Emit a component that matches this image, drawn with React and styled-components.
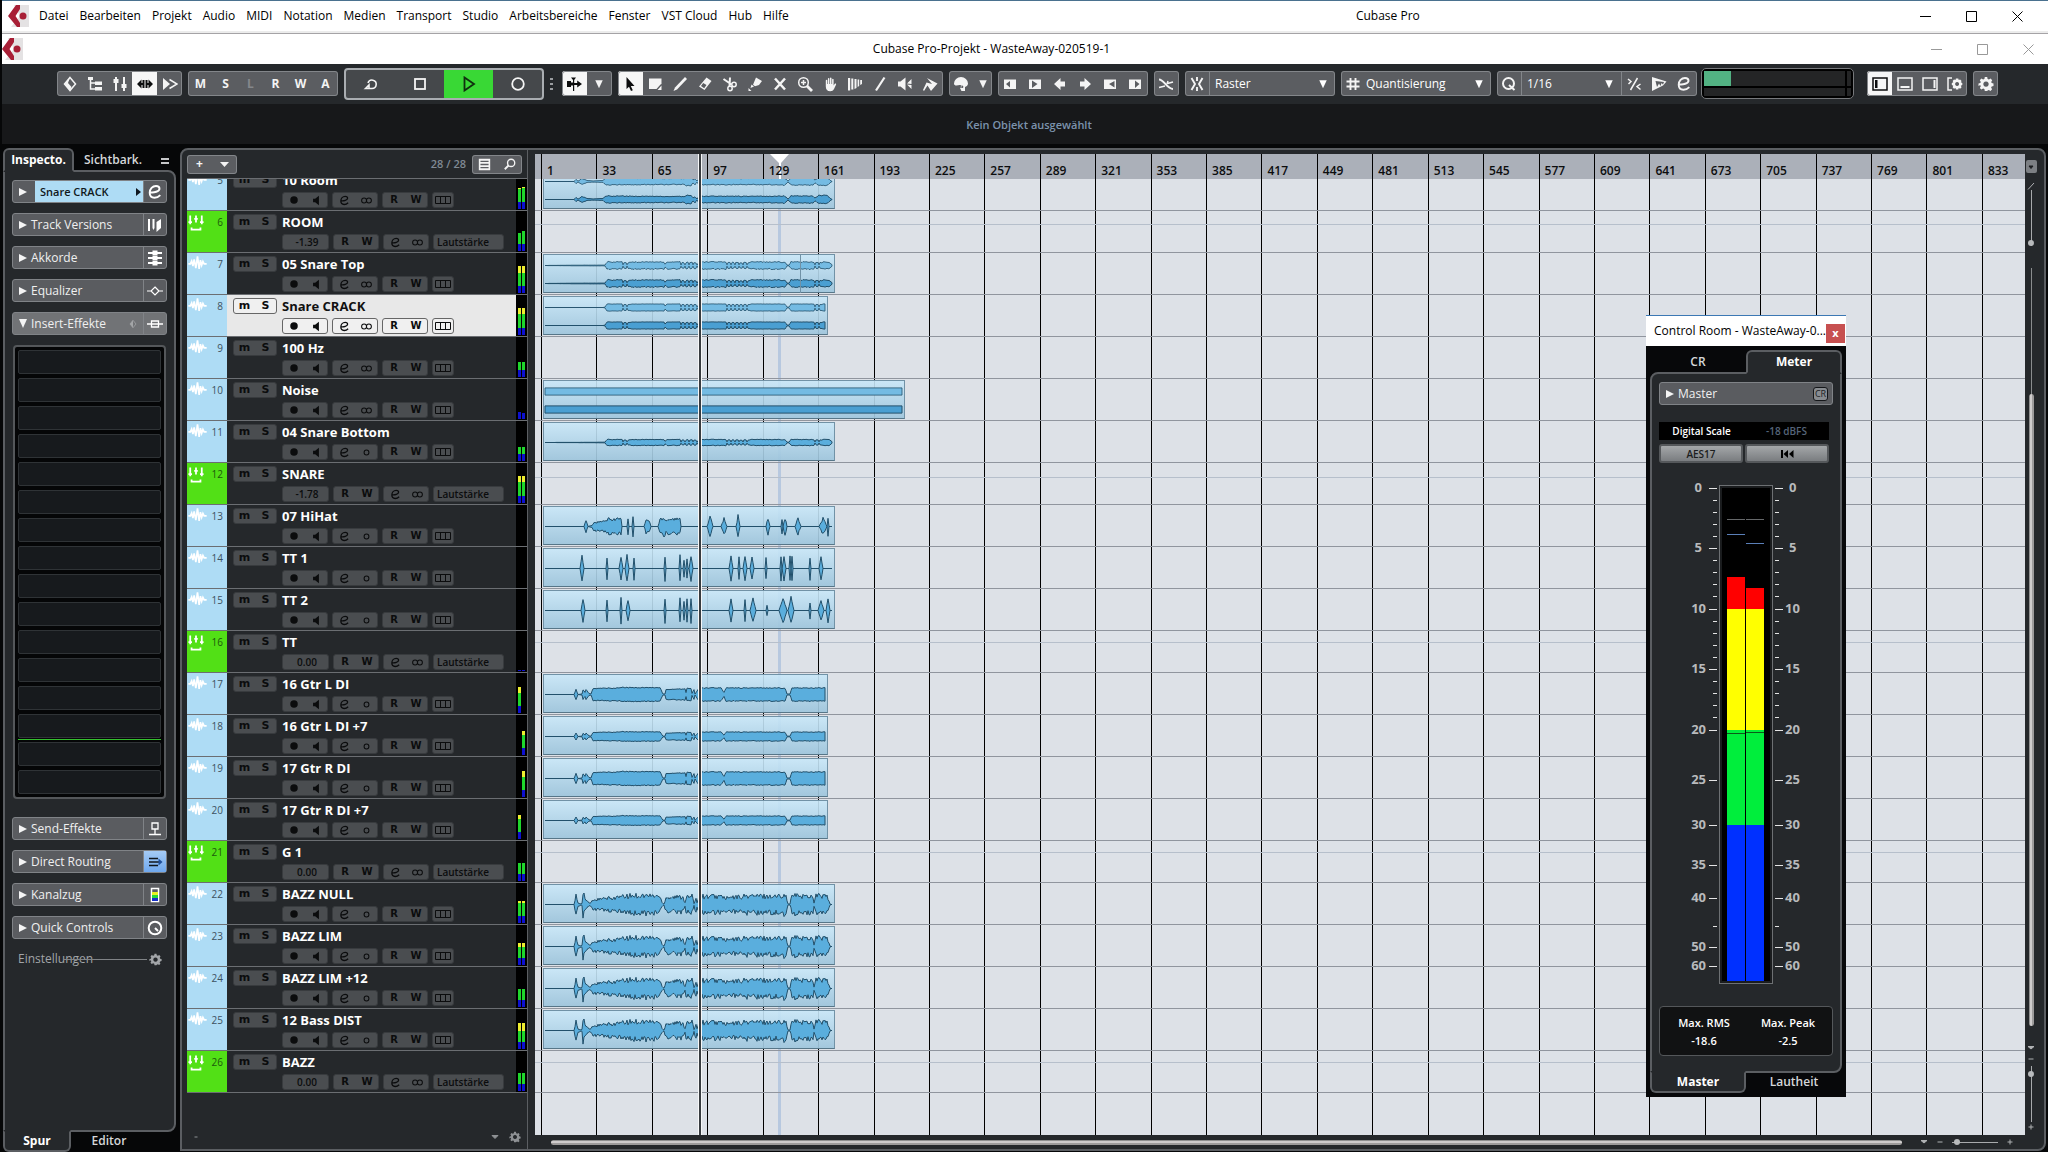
import React from "react";
import styled, {createGlobalStyle, css} from "styled-components";

const GlobalStyle = createGlobalStyle`
    * {
        box-sizing: border-box;
    }

    body {
        margin: 0;
        background: #060708;
        font-family: "Open Sans", "Noto Sans", sans-serif;
        font-size: 12px;
        line-height: 16px;
        color: #fff;
        overflow: hidden;
    }

    button,
    select {
        font: inherit;
        color: inherit;
        background: none;
        border: none;
        border-radius: 0;
        padding: 0;
        margin: 0;
        appearance: none;
    }
`;

const edge = "#5b5e62";
const panel = "#25282b";

/* ---------- icons ---------- */

const line = {fill: "none", stroke: "currentColor", strokeWidth: 1.5};

const icons = {
    diamond: <><path d="M8 1.500L13.500 8 8 14.500 2.500 8z" {...line}/><path d="M8 1.500L2.500 8 8 14.500 9.500 11 6 7z"/></>,
    tree: <><path d="M1 1h5v3H1zM8 5.500h7v3.500H8zM8 11h7v3.500H8z"/><path d="M3.500 3v10H8M3.500 7H8" {...line}/></>,
    faders: <path d="M3 1h2v2h1.500v4H5v8H3V7H1.500V3H3zM11 1h2v7h1.500v4H13v3h-2v-3H9.500V8H11z"/>,
    spread: <path d="M0 8l4.500-4.500V7h1V4h2v8h-2V9h-1v3.500zM16 8l-4.500-4.500V7h-1V4h-2v8h2V9h1v3.500z"/>,
    skip: <><path d="M1 2v12L8 8z"/><path d="M7.500 3.500L15 8l-7.500 4.500" {...line}/></>,
    cycle: <path d="M3 12.500h6a4.200 4.200 0 1 0-4-5.500M2.500 12.500L6 9v3.500z" {...line} strokeWidth="1.600"/>,
    stop: <rect x="3" y="3" width="10" height="10" {...line} strokeWidth="1.800"/>,
    play: <path d="M3.500 1.500L13 8l-9.500 6.500z" {...line} strokeWidth="1.800"/>,
    record: <circle cx="8" cy="8" r="5.800" {...line} strokeWidth="1.800"/>,
    autoscroll: <path d="M5 1.500h5L8.200 4v3h3V4.500L16 8l-4.800 3.500V9h-3v6H7V9.500H5V11H1V5h4v1.500h2V4z"/>,
    down: <path d="M3 3h10L8 13.500z"/>,
    arrow: <path d="M4.500 1l8 9H8.800l2 4.300-1.800.8-2-4.300L4.500 13z"/>,
    range: <path d="M2 2.500h12.500V8l-1 .5L9.500 13H2zM10.500 14l4-4.500V14z"/>,
    pencil: <path d="M13 1l2 2L5 13.500 1.500 15 3 11.500z"/>,
    eraser: <path d="M9.500 1.500L14.500 5 7.500 14 2 10.500zM4 10l3.200 2.200L9.500 9 6.200 7z" fillRule="evenodd"/>,
    scissors: <><path d="M1.500 3l8 5.500M8 1.500L7.500 10" {...line} strokeWidth="2"/><circle cx="12" cy="8.500" r="2.200" {...line}/><circle cx="8" cy="12.500" r="2.200" {...line}/></>,
    glue: <path d="M9 1.500l6 3.500-3 4-4 1.200-2-1.500zM4.500 8.500L7 10.500 3.500 12zM1.500 12l3 3h-3z"/>,
    cross: <path d="M3 2.500l10 11M13 2.500l-10 11" {...line} strokeWidth="2.500"/>,
    zoom: <><circle cx="6.500" cy="6.500" r="4.800" {...line}/><path d="M10 10l5 5" {...line} strokeWidth="2.800"/><path d="M4 6.500h5M6.500 4v5" {...line}/></>,
    hand: <path d="M3.800 4.500c0-1 1.500-1 1.500 0V8h.6V2.800c0-1 1.500-1 1.500 0V8H8V2.300c0-1 1.500-1 1.500 0V8h.6V3.500c0-1 1.500-1 1.500 0v6l1-1.500c.8-1 1.900-.3 1.400.8L12 13c-.8 1.600-2 2.200-3.700 2.200-3 0-4.500-1.500-4.500-4.700z"/>,
    comp: <path d="M1 2h2.200v12.500H1zM4.300 2.500h2v11h-2zM7.500 3h2v9l-2 1zM10.600 3.500h1.600v6.500l-1.600 1zM13.200 4H15v4l-1.800 1z"/>,
    slash: <path d="M12.500 1.500L4 14.500" {...line} strokeWidth="2.200"/>,
    speaker: <path d="M1 5.500h2.500L8.500 1.500v13l-5-4H1zM10 7.500L14.500 3v5zM10 8.500l4.500 4.500V9z"/>,
    warp: <path d="M5 2l8.500 4.500 2 1-6.500 7.500L5.500 9.500 2 15 1 14l3.500-7.500L10 8z"/>,
    palette: <path d="M8 1a7 6.500 0 0 1 7 6.500c0 2-1.500 3-3 3.500v4H8.500L7 12c1.500 0 2-1.500 1-2.500S5 9.500 3.500 9.500 1 9 1 7.500A7 6.500 0 0 1 8 1zM9 9.500a1.300 1.300 0 1 0 .1 0z" fillRule="evenodd"/>,
    boxLeft: <path d="M2 3.500h12v9.500H2zM8 5v6.500L4 8z" fillRule="evenodd"/>,
    boxRight: <path d="M2 3.500h12v9.500H2zM5 4.500v7.500L10.500 8z" fillRule="evenodd"/>,
    left: <path d="M2 8l6.500-6v3.500H13v5H8.500V14z"/>,
    right: <path d="M14 8L7.500 2v3.500H3v5h4.500V14z"/>,
    trimLeft: <path d="M2 3.500h12v9.500H2zM12.500 5v6.500L7 8z" fillRule="evenodd"/>,
    trimRight: <path d="M2 3.500h12v9.500H2zM8 4.500v7.500L12.500 8z" fillRule="evenodd"/>,
    crossfade: <><path d="M1 3.500c5 0 8 9.500 14 9.500" {...line} strokeWidth="2"/><path d="M9.500 7.500L15 6M10 5l-1 3M1 11.500l6-1.500" {...line}/></>,
    snap: <path d="M8 1v4M8 11v4M2.500 2L6 8l-3.500 6M13.500 2L10 8l3.500 6" {...line} strokeWidth="1.900"/>,
    hash: <path d="M5.500 2v12M10.500 2v12M1.500 5.500h13M1.500 10.500h13" {...line} strokeWidth="1.900"/>,
    loupe: <><circle cx="7.500" cy="7.500" r="5.500" {...line} strokeWidth="2"/><path d="M8 9l5.500 5" {...line} strokeWidth="2"/></>,
    soft: <path d="M11.500 2l-7 12M2 3l3 2.500L2.500 8M14.500 8L11 10.500l3.500 3" {...line}/>,
    flag: <path fillRule="evenodd" d="M1 1l14.500 4.500L12 9.500 1 15zM4.500 5l1.500 6L8 7.500l1.500 2.500 1-3 1.500 1.500 1-2.500z"/>,
    edit: <path d="M3 8.300c4 .6 9.500-.8 9.500-3.600C12.500 2.800 10.800 2 9 2 5.500 2 2.700 5 2.700 8.800c0 3.200 2 5 4.800 5 2.200 0 4.200-.9 5.800-2.600" {...line} strokeWidth="1.900"/>,
    zoneLeft: <><rect x="1" y="2" width="14" height="12" {...line}/><rect x="3" y="4" width="2.500" height="8"/></>,
    zoneBottom: <><rect x="1" y="2" width="14" height="12" {...line}/><rect x="3.500" y="10" width="9" height="2"/></>,
    zoneRight: <><rect x="1" y="2" width="14" height="12" {...line}/><rect x="11.500" y="4" width="2" height="8"/></>,
    gear: <path fillRule="evenodd" d="M6.800 1h2.400l.4 1.900 1.300.6 1.700-1 1.600 1.700-1 1.700.5 1.200 1.800.4v2.400l-1.800.5-.6 1.200 1 1.700-1.600 1.600-1.700-1-1.200.6L9.200 15H6.800l-.4-1.900-1.300-.5-1.700 1-1.600-1.600 1-1.700-.6-1.300L.500 9.900V7.500l1.800-.4.5-1.200-1-1.700 1.600-1.700 1.700 1 1.300-.6zM8 5.400a2.700 2.700 0 1 0 .01 0z"/>,
    zoneGear: <><path d="M5 2H1v12h4" {...line}/><path fillRule="evenodd" d="M8.900 2.500h2.400l.4 1.400 1.400-.5 1.500 1.600-.8 1.300 1.500.8v2l-1.500.7.8 1.400-1.500 1.500-1.400-.6-.4 1.500H8.900l-.4-1.500-1.500.6-1.400-1.500.7-1.400L4.800 9V7.100l1.500-.8L5.600 5 7 3.400l1.500.5zM10.100 6a2 2 0 1 0 .01 0z"/></>,
    versions: <path d="M1 2h2v12H1zM5.500 2h2v9l-1 2-1-2zM9.500 5L14 2v9l-4.500 4z"/>,
    chords: <path d="M1 2h4.500V.5h5V2H15v2h-4.500v1.500h-5V4H1zM1 7h4.500V6h5v1H15v2h-4.500v1h-5V9H1zM1 12h4.500v-1.500h5V12H15v2h-4.500v1.500h-5V14H1z"/>,
    eq: <path d="M0 8h4M12 8h4M8 4l4 4-4 4-4-4z" {...line} strokeWidth="1.200"/>,
    insert: <path d="M0 8h16M4.500 5h7v6h-7z" {...line} strokeWidth="1.300"/>,
    send: <path d="M5 2h6v6H5zM8 8v5M2 13.500h12" {...line} strokeWidth="1.300"/>,
    routing: <><path d="M2 4.500h9M2 8h10M2 11.500h9" stroke="#10161c" strokeWidth="1.500"/><path d="M11.500 4.500L15.500 8l-4 3.500z" fill="#1f4f9a"/></>,
    strip: <><path d="M4.500 1.500h7v13h-7z" {...line}/><path d="M5 5h6v3H5z" fill="#e8f020"/><path d="M5 8h6v3H5z" fill="#27d83a"/><path d="M5 11h6v3H5z" fill="#1730c8"/></>,
    knob: <><circle cx="8" cy="8" r="6.300" {...line} strokeWidth="2"/><path d="M8 8l3 3" {...line} strokeWidth="2"/></>,
    power: <><path d="M8 3l4 5-4 5-4-5z" {...line} strokeWidth="1"/><path d="M8 3L4 8l4 5z"/></>,
    list: <path fillRule="evenodd" d="M1 1h14v14H1zM3 3.500V5h10V3.500zM3 7.200v1.600h10V7.200zM3 11v1.500h10V11z"/>,
    find: <><circle cx="9.500" cy="6.500" r="4.800" {...line} strokeWidth="1.800"/><path d="M6 10l-5 5" {...line} strokeWidth="2.400"/></>,
    dot: <circle cx="8" cy="8" r="5"/>,
    monitor: <path d="M3 5.500h3L11.500 1v14L6 10.500H3z"/>,
    stereo: <><circle cx="4.500" cy="8" r="3.600" {...line}/><circle cx="11.500" cy="8" r="3.600" {...line}/></>,
    mono: <circle cx="8" cy="8" r="3.500" {...line}/>,
    wave: <path d="M0 9.500h2.500L4 6l1.500 6L7 4l2 10.500L11 .5l2 15L14.500 5 16 11l1.500-4.500L19 9.500h3" fill="none" stroke="currentColor" strokeWidth="2"/>,
    group: <path d="M2.500 1v10M9 1v8M15.500 1v10M0.500 8.500h4M7 5h4M13.500 8.500h4M4 14.500v2.500h10v-2.500" fill="none" stroke="currentColor" strokeWidth="2"/>,
};

const Svg = styled.svg`
    display: block;
    flex: none;
`;

const Icon = ({name, size = 16, box = "0 0 16 16", height}) => (
    <Svg width={size} height={height || size} viewBox={box} fill="currentColor" aria-hidden="true">{icons[name]}</Svg>
);

/* ---------- window title bars ---------- */

const App = styled.div`
    position: relative;
    display: flex;
    flex-direction: column;
    height: 100vh;
    padding-left: 2px;
    overflow: hidden;
`;

const TitleBar = styled.header`
    display: flex;
    align-items: center;
    flex: none;
    height: ${props => props.$sub ? 30 : 34}px;
    padding: 0 ${props => props.$sub ? "0 0 0" : "11px 2px 6px"};
    background: #fff;
    color: ${props => props.$sub ? "#999" : "#000"};
    border-top: ${props => props.$sub ? "none" : "1px solid #4a718f"};
    border-bottom: ${props => props.$sub ? "none" : "1px solid #a5a3a6"};
    box-shadow: ${props => props.$sub ? "none" : "inset 0 -2px #ececec"};
`;

const Menu = styled.nav`
    display: flex;
    gap: 11px;
    margin-left: 10px;
`;

const MenuItem = styled.button`
    color: #000;
`;

const WindowTitle = styled.div`
    flex: 1;
    padding-left: ${props => props.$sub ? 44 : 82}px;
    text-align: center;
    color: #000;
`;

const WindowButtons = styled.div`
    display: flex;
    gap: 6px;
`;

const WindowButton = styled.button`
    display: flex;
    justify-content: center;
    width: 40px;
`;

const Logo = () => (
    <Svg width="21" height="22" viewBox="0 0 21 22" aria-label="Cubase">
        <path d="M6 0h15v22H3L12 11z" fill="#e4e2e3"/>
        <path d="M8 0h4v4L7.500 11l4.500 7v4H9L0 11z" fill="#a81f36"/>
        <circle cx="15" cy="11" r="3.500" fill="#a81f36"/>
    </Svg>
);

const Controls = () => (
    <WindowButtons>
        {[["Minimieren", "M0 5.500h11"], ["Maximieren", "M1 .5h9.500v10H.5V.5z"], ["Schließen", "M.5.5l10 10M10.500.5l-10 10"]].map(([label, d]) => (
            <WindowButton key={label} aria-label={label}>
                <Svg width="11" height="11" fill="none" stroke="currentColor"><path d={d}/></Svg>
            </WindowButton>
        ))}
    </WindowButtons>
);

/* ---------- toolbar ---------- */

const Toolbar = styled.div`
    display: flex;
    align-items: center;
    flex: none;
    gap: 6px;
    height: 40px;
    padding: 0 50px 1px 55px;
    background: ${panel};
`;

const Group = styled.div`
    display: flex;
    align-items: center;
    flex: none;
    height: 25px;
    width: ${props => props.$width ? props.$width + "px" : "auto"};
    background: #5b5d61;
    border-radius: 3px;
    outline: 1px solid #83868a;
    outline-offset: -1px;
    overflow: hidden;
`;

const Tool = styled.button`
    display: flex;
    align-items: center;
    justify-content: center;
    flex: none;
    width: ${props => props.$width || 25}px;
    height: 25px;
    font-weight: 700;
    color: ${props => props.$active ? "#0c0d0e" : props.$dim ? "#85888c" : "#f4f4f4"};
    background: ${props => props.$active ? "#f6f6f6" : "none"};
    border-right: ${props => props.$line ? "1px solid #83868a" : "none"};
`;

const Transport = styled.div`
    display: flex;
    flex: none;
    height: 32px;
    border: 2px solid #a9adb1;
    border-radius: 4px;
    background: #45484b;
`;

const TransportButton = styled.button`
    display: flex;
    align-items: center;
    justify-content: center;
    width: 49px;
    color: ${props => props.$active ? "#10300f" : "#f4f4f4"};
    background: ${props => props.$active ? "#39d835" : "none"};
`;

const Grip = styled.div`
    width: 3px;
    height: 12px;
    margin-right: 3px;
    background: repeating-linear-gradient(#9a9da0 0 2px, transparent 2px 5px);
`;

const Pick = styled.label`
    position: relative;
    display: flex;
    align-items: center;
    flex: 1;
    height: 25px;
    border-right: ${props => props.$line ? "1px solid #83868a" : "none"};

    select {
        width: 100%;
        padding-left: ${props => props.$tight ? 0 : 5}px;
    }

    svg {
        position: absolute;
        right: 6px;
        pointer-events: none;
    }
`;

const Performance = styled.div`
    display: grid;
    grid-template: 15px 8px / 1fr 4px;
    gap: 2px;
    width: 154px;
    height: 31px;
    padding: 2px;
    background: #000;
    border: 1px solid #77797c;
    border-radius: 5px;
    margin: 0 7px 0 -2px;
`;

const PerformanceBar = styled.div`
    background: ${props => props.$load ? "linear-gradient(90deg, #52b283 27px, #242526 27px)" : "#242526"};
`;

const InfoLine = styled.div`
    display: flex;
    align-items: center;
    justify-content: center;
    flex: none;
    height: 40px;
    padding: 2px 0 0 8px;
    margin-bottom: 4px;
    background: #17181a;
    color: #7c93ad;
    font-size: 11px;
    font-weight: 600;
`;

const Tools = ({names, active, width}) => (
    <Group>
        {names.map((name, i) => (
            <Tool key={name} aria-label={name} $active={i === active} $width={width}><Icon name={name}/></Tool>
        ))}
    </Group>
);

const ProjectToolbar = () => (
    <Toolbar>
        <Tools names={["diamond", "tree", "faders", "spread", "skip"]} active={3}/>
        <Group>
            {["M", "S", "L", "R", "W", "A"].map(letter => <Tool key={letter} $dim={letter === "L"}>{letter}</Tool>)}
        </Group>
        <Transport>
            {["cycle", "stop", "play", "record"].map(name => (
                <TransportButton key={name} aria-label={name} $active={name === "play"}><Icon name={name}/></TransportButton>
            ))}
        </Transport>
        <Grip/>
        <Group>
            <Tool $active aria-label="Auto-Scroll"><Icon name="autoscroll"/></Tool>
            <Tool aria-label="Auto-Scroll-Optionen"><Icon name="down" size={12}/></Tool>
        </Group>
        <Tools active={0} names={["arrow", "range", "pencil", "eraser", "scissors", "glue", "cross", "zoom", "hand", "comp", "slash", "speaker", "warp"]}/>
        <Group>
            <Tool aria-label="Farben"><Icon name="palette"/></Tool>
            <Tool aria-label="Farbmenü" $width={18}><Icon name="down" size={12}/></Tool>
        </Group>
        <Tools names={["boxLeft", "boxRight", "left", "right", "trimLeft", "trimRight"]}/>
        <Tools names={["crossfade"]}/>
        <Group $width={150}>
            <Tool $line aria-label="Raster an"><Icon name="snap"/></Tool>
            <Pick><select aria-label="Rastertyp"><option>Raster</option></select><Icon name="down" size={12}/></Pick>
        </Group>
        <Group $width={150}>
            <Tool aria-label="Rasterwert"><Icon name="hash"/></Tool>
            <Pick $tight><select aria-label="Quantisierung"><option>Quantisierung</option></select><Icon name="down" size={12}/></Pick>
        </Group>
        <Group $width={200}>
            <Tool $line aria-label="Quantisieren"><Icon name="loupe"/></Tool>
            <Pick $line><select aria-label="Quantisierungswert"><option>1/16</option></select><Icon name="down" size={12}/></Pick>
            {["soft", "flag", "edit"].map(name => <Tool key={name} aria-label={name}><Icon name={name}/></Tool>)}
        </Group>
        <Performance>
            <PerformanceBar $load/>
            <PerformanceBar/>
            <PerformanceBar/>
            <PerformanceBar/>
        </Performance>
        <Tools names={["zoneLeft", "zoneBottom", "zoneRight", "zoneGear"]} active={0}/>
        <Tools names={["gear"]}/>
    </Toolbar>
);

/* ---------- tabbed frames ---------- */

const Frame = styled.section`
    display: flex;
    flex-direction: column;
    flex: none;
    width: ${props => props.$width}px;
`;

const Tabs = styled.div`
    display: flex;
    flex: none;
    align-items: stretch;
    height: ${props => props.$bottom ? 22 : 24}px;
    margin: ${props => props.$bottom ? "-2px 0 0" : "0 0 -2px"};
    z-index: 1;
`;

const Tab = styled.button`
    width: ${props => props.$width || 96}px;
    font-size: 12px;
    font-weight: ${props => props.$active ? 700 : 600};
    color: ${props => props.$active ? "#fff" : "#d5d7d9"};
    border: 2px solid transparent;
    ${props => props.$active && css`
        background: ${panel};
        border-color: ${edge};
        border-radius: ${props.$bottom ? "0 0 6px 6px" : "6px 6px 0 0"};
        border-${props.$bottom ? "top" : "bottom"}-color: ${panel};
    `}
`;

const Body = styled.div`
    display: flex;
    flex-direction: column;
    flex: 1;
    min-height: 0;
    padding: 8px 7px;
    background: ${panel};
    border: 2px solid ${edge};
    border-radius: ${props => props.$corners};
`;

const MenuMark = styled.button`
    width: 8px;
    height: 6px;
    margin: 10px 0 0 9px;
    border: solid #c5c7c9;
    border-width: 2px 0;
`;

/* ---------- inspector ---------- */

const Section = styled.div`
    display: flex;
    flex: none;
    height: 23px;
    margin-bottom: 10px;
    background: ${props => props.$open ? "#717376" : "#5a5c60"};
    border: 1px solid #808387;
    border-radius: 3px;
`;

const SectionName = styled.button`
    display: flex;
    align-items: center;
    flex: 1;
    gap: 3px;
    padding-left: 5px;
    color: #f0f0f0;
`;

const SectionTrack = styled.span`
    display: flex;
    align-items: center;
    justify-content: space-between;
    flex: 1;
    align-self: stretch;
    padding: 0 2px 0 5px;
    margin-left: 4px;
    background: #aedcf5;
    color: #101820;
    font-size: 11px;
    font-weight: 600;
`;

const SectionTool = styled.button`
    display: flex;
    align-items: center;
    justify-content: center;
    width: 23px;
    border-left: 1px solid #808387;
    background: ${props => props.$on ? "linear-gradient(#a5cbf5, #6fa8ee)" : "none"};
`;

const Grow = styled.span`
    flex: 1;
    text-align: left;
`;

const Faint = styled.span`
    color: #a4a6a8;
    padding-right: 4px;
`;

const Slots = styled.div`
    display: flex;
    flex-direction: column;
    flex: none;
    gap: 4px;
    padding: 3px;
    margin: 0 1px 18px;
    background: #050607;
    border: 2px solid #54575a;
    border-radius: 4px;
`;

const Slot = styled.button`
    position: relative;
    height: 24px;
    background: #171a1d;
    border: 1px solid #2f3336;
    border-radius: 2px;

    &:nth-child(15)::before {
        content: "";
        position: absolute;
        inset: -4px -1px auto;
        height: 1px;
        background: #35c02f;
    }
`;

const Settings = styled.button`
    display: flex;
    align-items: center;
    padding: 2px 5px 0 6px;
    color: #a2a5a8;

    &::before {
        content: "";
        order: 1;
        flex: 1;
        height: 1px;
        margin: 0 2px 0 -30px;
        background: #808386;
    }

    svg {
        order: 2;
    }
`;

const Triangle = ({open}) => (
    <Svg width="10" height="10" fill="#f4f4f4"><path d={open ? "M1 0h8L5 9z" : "M1 1l8 4-8 4z"}/></Svg>
);

const InspectorSection = ({name, icon, open, on}) => (
    <Section $open={open}>
        <SectionName>
            <Triangle open={open}/><Grow>{name}</Grow>
            {open && <Faint><Icon name="power" size={12}/></Faint>}
        </SectionName>
        <SectionTool $on={on} aria-label={name + " bearbeiten"}><Icon name={icon}/></SectionTool>
    </Section>
);

const Inspector = () => (
    <Frame $width={173}>
        <Tabs>
            <Tab $active $width={71}>Inspecto.</Tab>
            <Tab $width={78}>Sichtbark.</Tab>
            <MenuMark aria-label="Menü"/>
        </Tabs>
        <Body $corners="0 8px 8px 0">
            <Section>
                <SectionName>
                    <Triangle/>
                    <SectionTrack>
                        Snare CRACK
                        <Svg width="5" height="8" fill="#101820"><path d="M0 0l5 4-5 4z"/></Svg>
                    </SectionTrack>
                </SectionName>
                <SectionTool aria-label="Kanal bearbeiten"><Icon name="edit"/></SectionTool>
            </Section>
            <InspectorSection name="Track Versions" icon="versions"/>
            <InspectorSection name="Akkorde" icon="chords"/>
            <InspectorSection name="Equalizer" icon="eq"/>
            <InspectorSection name="Insert-Effekte" icon="insert" open/>
            <Slots>
                {Array.from({length: 16}, (_, i) => <Slot key={i} aria-label={"Insert " + (i + 1)}/>)}
            </Slots>
            <InspectorSection name="Send-Effekte" icon="send"/>
            <InspectorSection name="Direct Routing" icon="routing" on/>
            <InspectorSection name="Kanalzug" icon="strip"/>
            <InspectorSection name="Quick Controls" icon="knob"/>
            <Settings>Einstellungen<Icon name="gear" size={13}/></Settings>
        </Body>
        <Tabs $bottom>
            <Tab $active $bottom $width={68}>Spur</Tab>
            <Tab $bottom $width={76}>Editor</Tab>
        </Tabs>
    </Frame>
);

/* ---------- wave forms ---------- */

// repeatable jitter, so that a clip looks the same on every render
const rand = n => {
    const v = Math.sin(n * 127.1) * 43758.5453;
    return v - Math.floor(v);
};

const spikes = list => list.flatMap(([x, w, a]) => [[x - w, 0], [x, a], [x + w, 0]]);

const beads = (from, to, amp) => {
    const out = [];
    for (let x = from; x < to; x += 4) out.push([x, 0.6], [x + 1, amp], [x + 3, amp]);
    return out;
};

const levelAt = (env, x) => {
    for (let i = 1; i < env.length; i++) {
        const [x0, a0] = env[i - 1];
        const [x1, a1] = env[i];
        if (x <= x1) return x1 === x0 ? a1 : a0 + (a1 - a0) * (x - x0) / (x1 - x0);
    }
    return 0;
};

const snareHits = [
    [62, 0.4], [64, 3.5], [79, 3.5], ...beads(80, 88, 3), [89, 3.5], [121, 3.5], [122, 1.5], [124, 3.5], [137, 3.5],
    ...beads(138, 152, 3), [154, 0.4], [156, 3.5], [183, 3.5], ...beads(184, 206, 3), [207, 3.5], [242, 3.5], [244, 0.4],
    [246, 0.4], [248, 3.5], [271, 3.5], ...beads(272, 277, 3), [278, 3.5],
];
const gtrEnv = [
    [0, 0], [31, 0], [33, 5], [35, 0], [39, 0.5], [40, 5], [42, 2], [43, 5], [46, 1], [48, 0.5], [50, 6], [75, 6.4], [80, 7],
    [117, 6.8], [120, 0.5], [122, 0.5], [123, 5], [140, 5.5], [142, 6], [143, 2], [144, 6], [148, 6], [149, 1], [151, 5],
    [152, 0.5], [155, 5], [156, 6.5], [178, 6.5], [181, 2], [183, 6.5], [242, 6.5], [244, 0.5], [247, 0.5], [249, 6.5],
];
const bassEnv = [
    [0, 0], [31, 0], [33, 9], [35, 2], [38, 0.5], [39, 1], [40, 14], [42, 5], [47, 1], [50, 4.5], [60, 5.5], [75, 7], [92, 9],
    [116, 8.5], [120, 1], [121, 0.5], [123, 7], [140, 7.5], [142, 2], [143, 7], [149, 8], [151, 1], [153, 8], [154, 2],
    [156, 8], [180, 8], [182, 6], [205, 8.5], [235, 8], [242, 11], [245, 0.5], [247, 0.5], [249, 9], [270, 8], [271, 2],
    [273, 9], [284, 8], [287, 0.5],
];

const waves = {
    room: {
        jitter: 0.3,
        env: [[0, 0], [31, 0], [33, 2], [35, 0.5], [39, 3], [44, 1], [50, 0.6], [60, 1], [63, 3.4], [141, 3], [143, 4],
            [148, 4], [150, 1.5], [152, 3], [154, 0.5], [156, 3.2], [235, 3.2], [241, 4], [245, 0.5], [248, 3.5], [270, 3.5],
            [272, 1.5], [276, 4], [284, 4], [288, 0.5], [290, 0]],
    },
    snare: {jitter: 0.35, env: [[0, 0], [32, 0.3], [62, 0.4], ...snareHits, [286, 3], [290, 0]]},
    crack: {jitter: 0.1, env: [[0, 0], [60, 0], ...snareHits, [283, 3.5]]},
    noise: {jitter: 0, env: [[0, 3.6], [400, 3.6]]},
    bottom: {jitter: 0.25, env: [[0, 0], [48, 0.2], ...snareHits.map(([x, a]) => [x, a * 0.85]), [286, 3], [290, 0]]},
    hihat: {
        jitter: 0.5,
        env: [[0, 0], ...spikes([[43, 2, 6]]), [49, 1], [51, 4], [62, 5], [65, 7], [78, 7.5], [79, 0],
            ...spikes([[85, 1, 10], [90, 1, 10]]), [101, 0], [103, 6], [106, 6], [108, 0], [115, 0], [117, 7], [121, 9], [123, 6], [126, 7.5],
            [137, 7], [138, 0], ...spikes([[167, 3, 10], [181, 3, 8], [195, 2, 10], [225, 2, 9], [239, 1, 9], [242, 2, 9], [255, 3, 8], [280, 4, 8], [285, 1, 9]])],
    },
    tt1: {
        jitter: 0.2,
        env: [[0, 0], ...spikes([[39, 2, 13], [64, 1, 11], [78, 2, 11], [84, 2, 13], [91, 1, 11], [122, 1, 12], [137, 1, 13],
            [141, 1, 9], [144, 1, 9], [148, 2, 12], [188, 2, 12], [196, 1, 11], [202, 2, 12], [209, 2, 11], [223, 1, 11],
            [238, 1, 13], [241, 2, 12], [247, 1, 13], [249, 1, 12], [267, 1, 11], [278, 2, 12]])],
    },
    tt2: {
        jitter: 0.2,
        env: [[0, 0], ...spikes([[40, 2, 12], [64, 1, 11], [78, 1, 13], [85, 2, 11], [122, 1, 12], [137, 1, 12], [141, 1, 10],
            [144, 1, 11], [148, 1, 12], [188, 2, 11], [202, 1, 11], [210, 3, 12], [224, 1, 5], [240, 4, 13], [248, 3, 13],
            [267, 1, 8], [278, 3, 10], [285, 2, 12]])],
    },
    gtr: {jitter: 0.16, env: [...gtrEnv, [300, 6.5]]},
    gtrSoft: {jitter: 0.18, env: [...gtrEnv, [300, 6.5]].map(([x, a]) => [x, a * 0.68])},
    bass: {jitter: 0.65, env: bassEnv},
};

const wavePath = (kind, width, cy) => {
    const {env, jitter} = waves[kind];
    const top = [];
    const bottom = [];
    for (let x = 2; x <= width - 3; x++) {
        const a = levelAt(env, x);
        top.push(`${x} ${(cy - a * (1 + jitter * (rand(x) - 0.5))).toFixed(1)}`);
        bottom.unshift(`${x} ${(cy + a * (1 + jitter * (rand(x + 500) - 0.5))).toFixed(1)}`);
    }
    return "M" + top.concat(bottom).join("L") + "Z";
};

/* ---------- tracks ---------- */

// meter: levels of both bars in pixels, and how much of the top is yellow
const tracks = [
    {no: 5, name: "10 Room", wave: "room", two: true, width: 292, meter: [21, 22, 1]},
    {no: 6, name: "ROOM", group: "-1.39", lane: 13, meter: [18, 20, 0]},
    {no: 7, name: "05 Snare Top", wave: "snare", two: true, width: 292, cut: 257, meter: [27, 27, 7]},
    {no: 8, name: "Snare CRACK", wave: "crack", two: true, width: 285, selected: true, meter: [27, 27, 6]},
    {no: 9, name: "100 Hz", two: true, meter: [15, 15, 0]},
    {no: 10, name: "Noise", wave: "noise", two: true, width: 362, meter: [7, 6, 0]},
    {no: 11, name: "04 Snare Bottom", wave: "bottom", width: 292, meter: [14, 14, 0]},
    {no: 12, name: "SNARE", group: "-1.78", lane: 14, meter: [27, 27, 6]},
    {no: 13, name: "07 HiHat", wave: "hihat", width: 292, meter: [0, 0, 0]},
    {no: 14, name: "TT 1", wave: "tt1", width: 292, meter: [0, 0, 0]},
    {no: 15, name: "TT 2", wave: "tt2", width: 292, meter: [0, 0, 0]},
    {no: 16, name: "TT", group: "0.00", lane: 11, meter: [1, 1, 0]},
    {no: 17, name: "16 Gtr L DI", wave: "gtr", width: 285, meter: [26, 0, 6]},
    {no: 18, name: "16 Gtr L DI +7", wave: "gtrSoft", width: 285, meter: [0, 24, 4]},
    {no: 19, name: "17 Gtr R DI", wave: "gtr", width: 285, meter: [0, 26, 6]},
    {no: 20, name: "17 Gtr R DI +7", wave: "gtrSoft", width: 285, meter: [24, 0, 4]},
    {no: 21, name: "G 1", group: "0.00", lane: 11, meter: [18, 18, 0]},
    {no: 22, name: "BAZZ NULL", wave: "bass", width: 292, meter: [22, 22, 2]},
    {no: 23, name: "BAZZ LIM", wave: "bass", width: 292, meter: [22, 22, 4]},
    {no: 24, name: "BAZZ LIM +12", wave: "bass", width: 292, meter: [18, 18, 0]},
    {no: 25, name: "12 Bass DIST", wave: "bass", width: 292, meter: [26, 26, 8]},
    {no: 26, name: "BAZZ", group: "0.00", lane: 11, meter: [18, 18, 0]},
];

const Project = styled.section`
    display: flex;
    flex: 1;
    min-width: 0;
    margin: 0 2px 1px 0;
    background: ${panel};
    border: 2px solid ${edge};
    border-radius: 8px 8px 8px 0;
`;

const TrackList = styled.div`
    display: flex;
    flex-direction: column;
    flex: none;
    width: 346px;
    padding-left: 5px;
    border-right: 1px solid ${edge};
`;

const ListHeader = styled.div`
    display: flex;
    align-items: center;
    flex: none;
    height: 29px;
    padding-right: 5px;
    border-bottom: 1px solid #6b6e72;
`;

const HeaderGroup = styled(Group)`
    height: 19px;
`;

const Count = styled.div`
    margin: 0 6px 0 auto;
    color: #808a94;
    font-size: 11px;
    font-weight: 600;
`;

const Rows = styled.div`
    flex: 1;
    min-height: 0;
    overflow: hidden;

    > :first-child {
        margin-top: -10px;
    }
`;

const TrackRow = styled.div`
    display: flex;
    height: 42px;
    border-bottom: 1px solid #6b6e72;
    color: ${props => props.$selected ? "#111" : "#fff"};
    background: ${props => props.$selected ? "#e8e8e8" : "none"};
`;

const Strip = styled.div`
    display: flex;
    justify-content: space-between;
    align-items: flex-start;
    width: 40px;
    padding: 3px 4px 0 1px;
    color: #fff;
    background: ${props => props.$group ? "#52e016" : "#aedcf5"};

    span {
        font-size: 10px;
        color: ${props => props.$group ? "#1c5a0c" : "#3d5261"};
    }
`;

const TrackBody = styled.div`
    display: grid;
    grid-template: 16px 16px / 44px 1fr;
    gap: 4px 5px;
    flex: 1;
    padding: 3px 0 0 6px;
`;

const TrackName = styled.div`
    font-size: 13px;
    font-weight: 700;
`;

const Keys = styled.div`
    display: flex;
    width: ${props => props.$width}px;
    height: 16px;
    background: ${props => props.$light ? "#f0f0f0" : "#4a4d50"};
    border: 1px solid ${props => props.$light ? "#666" : "#383b3e"};
    border-radius: 3px;
    color: #0b0c0d;
`;

const Key = styled.button`
    display: flex;
    align-items: center;
    justify-content: center;
    flex: 1;
    font-family: "DejaVu Sans", sans-serif;
    font-size: ${props => props.$small ? 10 : 11}px;
    font-weight: 700;
    line-height: 14px;

    & + & {
        border-left: ${props => props.$split ? "1px solid #26282a" : "none"};
    }
`;

const Value = styled.button`
    flex: 1;
    padding-left: 3px;
    font-size: 10px;
    font-weight: 600;
    line-height: 14px;
    text-align: ${props => props.$center ? "center" : "left"};
`;

const TrackKeys = styled.div`
    grid-column: 2;
    display: flex;
    gap: 4px;
`;

const MeterBox = styled.div`
    display: flex;
    align-items: flex-end;
    gap: 1px;
    width: 11px;
    padding: 0 2px 1px;
    background: #000;
`;

const MeterBar = styled.div`
    flex: 1;
    background: linear-gradient(0deg, #0d10d0 7px, #1fd62c 7px);
    border-top: solid #eeee30;
    border-top-width: ${props => props.$hot}px;
`;

const ListFooter = styled.div`
    display: flex;
    align-items: center;
    flex: none;
    gap: 10px;
    height: 24px;
    padding: 0 6px 0 6px;
    color: #8e9194;
`;

const Track = ({track}) => {
    const light = track.selected;
    const automation = (
        <Keys $width={46} $light={light}><Key $small>R</Key><Key $small>W</Key></Keys>
    );
    const channel = (
        <Keys $width={46} $light={light}>
            <Key aria-label="Kanal"><Icon name="edit" size={11}/></Key>
            <Key aria-label="Format"><Icon name={track.two || track.group ? "stereo" : "mono"} size={11}/></Key>
        </Keys>
    );

    return (
        <TrackRow $selected={light}>
            <Strip $group={track.group}>
                {track.group ? <Icon name="group" size={16} height={17} box="0 0 18 18"/> : <Icon name="wave" size={19} height={15} box="0 0 22 18"/>}
                <span>{track.no}</span>
            </Strip>
            <TrackBody>
                <Keys $width={44} $light={light}><Key $split>m</Key><Key $split>S</Key></Keys>
                <TrackName>{track.name}</TrackName>
                <TrackKeys>
                    {track.group ? <>
                        <Keys $width={47}><Value $center>{track.group}</Value></Keys>
                        {automation}
                        {channel}
                        <Keys $width={71}><Value>Lautstärke</Value></Keys>
                    </> : <>
                        <Keys $width={46} $light={light}>
                            <Key aria-label="Aufnahme"><Icon name="dot" size={12}/></Key>
                            <Key aria-label="Monitor"><Icon name="monitor" size={11}/></Key>
                        </Keys>
                        {channel}
                        {automation}
                        <Keys $width={22} $light={light}>
                            <Key aria-label="Spuren">
                                <Svg width="16" height="8" fill="none" stroke="currentColor"><path d="M.5.5h15v7H.5zM5.500 0v8M10.500 0v8"/></Svg>
                            </Key>
                        </Keys>
                    </>}
                </TrackKeys>
            </TrackBody>
            <MeterBox>
                {track.meter.slice(0, 2).map((level, i) => (
                    <MeterBar key={i} $hot={level ? track.meter[2] : 0} style={{height: level}}/>
                ))}
            </MeterBox>
        </TrackRow>
    );
};

/* ---------- arrangement ---------- */

const Timeline = styled.div`
    position: relative;
    display: flex;
    flex-direction: column;
    flex: 1;
    min-width: 0;
    margin: 4px 0 0 7px;
`;

const Cells = styled.div`
    position: relative;
    display: grid;
    grid-template-columns: repeat(26, 9fr) 7fr;
    height: 100%;
    padding-left: 6px;
    ${props => props.$grid && css`
        position: absolute;
        inset: 0;
    `}
`;

const Cell = styled.div`
    min-width: 0;
    border-left: 1px solid #000;
    padding: 9px 0 0 5px;
    overflow: hidden;
`;

const Ruler = styled.div`
    position: relative;
    flex: none;
    height: 25px;
    background: #abb0b9;
    color: #0c0d0e;
    font-weight: 600;
    overflow: hidden;
`;

const Arrange = styled.div`
    position: relative;
    flex: 1;
    min-height: 0;
    background: #dde1e7;
    overflow: hidden;
`;

const Lanes = styled(Rows)`
    position: relative;
`;

const Lane = styled.div`
    position: relative;
    height: 42px;
    padding: 1px 0 0 8px;
    border-bottom: 1px solid #90959e;
`;

const Automation = styled.div`
    height: 1px;
    margin-left: -8px;
    background: #b6bfcb;
`;

const Clip = styled.div`
    width: ${props => props.$width}px;
    height: 39px;
    background: linear-gradient(rgba(200, 231, 248, 0.9), rgba(158, 197, 220, 0.92));
    border: 1px solid #7192a6;
    border-bottom-color: #577688;

    svg {
        margin: -1px;
    }
`;

const Playhead = styled.div`
    position: absolute;
    top: 0;
    bottom: 14px;
    left: 163px;
    width: 4px;
    background: #383c40;
    border: solid #f6f7f8;
    border-width: 0 1px;
`;

const Locator = styled.div`
    position: absolute;
    top: 0;
    bottom: 0;
    left: 243px;
    width: 3px;
    background: #b7c8df;
`;

const LocatorFlag = styled.svg`
    position: absolute;
    top: 0;
    left: 235px;
`;

const ScrollRow = styled.div`
    display: flex;
    align-items: center;
    flex: none;
    gap: 8px;
    height: 14px;
    padding-left: 16px;
    margin-right: 11px;
    color: #b0b2b4;
`;

const ScrollThumb = styled.div`
    flex: ${props => props.$vertical ? "none" : 1};
    width: ${props => props.$vertical ? "5px" : "auto"};
    height: ${props => props.$vertical ? "65%" : "5px"};
    margin: ${props => props.$vertical ? "0 0 18px" : "0 10px 0 0"};
    background: linear-gradient(${props => props.$vertical ? "90deg" : "180deg"}, #8f8f8f 1px, #cfcccc 1px 3px, #9d9b9b 3px);
    border-radius: 3px;
`;

const ZoomRange = styled.input`
    appearance: none;
    flex: none;
    width: ${props => props.$vertical ? "6px" : "46px"};
    height: ${props => props.$vertical ? "56px" : "6px"};
    margin: 0;
    writing-mode: ${props => props.$vertical ? "vertical-lr" : "horizontal-tb"};
    background: linear-gradient(#a8aaac, #a8aaac) center / ${props => props.$vertical ? "1px 100%" : "100% 1px"} no-repeat;

    &::-webkit-slider-thumb {
        appearance: none;
        width: 6px;
        height: 6px;
        border-radius: 3px;
        background: #b8babc;
    }
`;

const Rail = styled.div`
    display: flex;
    flex-direction: column;
    align-items: center;
    flex: none;
    width: 19px;
    padding: 10px 7px 17px 0;
    color: #b0b2b4;
`;

const RailButton = styled.button`
    display: flex;
    align-items: center;
    justify-content: center;
    flex: none;
    width: 11px;
    height: 13px;
    margin-bottom: 9px;
    background: #7d8084;
    color: #1c1e20;
    border-radius: 2px;
`;

const RailTrack = styled.div`
    flex: 1;
    width: 1px;
    margin-top: 22px;
    background: #8a8c8e;
`;

const Spacer = styled.div`
    flex: 1;
`;

const Marks = ({d, width = 8, height = 8}) => (
    <Svg width={width} height={height} viewBox="0 0 8 8" fill="currentColor" stroke="currentColor"><path d={d}/></Svg>
);

const TimelineView = () => (
    <Timeline>
        <Ruler>
            <LocatorFlag width="19" height="25" fill="#fff"><path d="M0 0h19l-8 9v16H9V9z"/></LocatorFlag>
            <Cells>
                {Array.from({length: 27}, (_, i) => <Cell key={i}>{1 + i * 32}</Cell>)}
            </Cells>
        </Ruler>
        <Arrange>
            <Cells $grid>{Array.from({length: 27}, (_, i) => <Cell key={i}/>)}</Cells>
            <Locator/>
            <Lanes>
                {tracks.map(track => (
                    <Lane key={track.no}>
                        {track.group && <Automation style={{marginTop: track.lane - 1}}/>}
                        {track.wave && <Clip $width={track.width}>
                            <Svg width={track.width} height="39" fill="#5aaedd" stroke="#22506b">
                                {track.two
                                    ? <><path d={wavePath(track.wave, track.width, 11.5)} fill="#74bbe3" strokeOpacity="0.8"/><path d={wavePath(track.wave, track.width, 29.5)} fill="#4a9fd2"/></>
                                    : <path d={wavePath(track.wave, track.width, 20.5)}/>}
                                {track.cut && <path d={`M${track.cut}.500 0v39`} stroke="#7192a6"/>}
                            </Svg>
                        </Clip>}
                    </Lane>
                ))}
            </Lanes>
        </Arrange>
        <Playhead/>
        <ScrollRow>
            <ScrollThumb/>
            <Marks d="M1 2.500h6L4 5z"/>
            <Marks d="M1.500 4h5"/>
            <ZoomRange type="range" defaultValue="5" aria-label="Zoom horizontal"/>
            <Marks d="M1.500 4h5M4 1.500v5"/>
        </ScrollRow>
    </Timeline>
);

/* ---------- control room ---------- */

const Floating = styled.aside`
    position: absolute;
    top: 315px;
    right: 202px;
    width: 200px;
    background: #07080a;
    border-top: 1px solid #3c78b4;
    z-index: 2;
`;

const FloatingTitle = styled.div`
    display: flex;
    align-items: center;
    justify-content: space-between;
    height: 30px;
    padding: 0 1px 0 8px;
    background: #fff;
    color: #000;
    white-space: nowrap;
`;

const Close = styled.button`
    flex: none;
    width: 19px;
    height: 19px;
    margin-top: 4px;
    background: #c75050;
    color: #fff;
    font-size: 11px;
    font-weight: 700;
    line-height: 16px;
`;

const FloatingFrame = styled(Frame)`
    margin: 4px;
`;

const CrBadge = styled.span`
    align-self: center;
    width: 15px;
    margin-right: 4px;
    background: #888c90;
    border: 1px solid #15171a;
    border-radius: 3px;
    color: #202326;
    font-size: 9px;
    line-height: 12px;
`;

const ScaleLine = styled.div`
    display: grid;
    grid-template-columns: 1fr 1fr;
    align-items: center;
    height: 18px;
    margin: 7px 4px 4px 0;
    background: #000;
    font-size: 10px;
    text-align: center;
    font-weight: 600;

    span {
        color: #56657a;
    }
`;

const ScaleButtons = styled.div`
    display: grid;
    grid-template-columns: 1fr 1fr;
    gap: 2px;
    height: 19px;
    margin-right: 4px;
`;

const ScaleButton = styled.button`
    display: flex;
    align-items: center;
    justify-content: center;
    background: linear-gradient(#a4a7a9, #7a7d80);
    border: 2px solid #55585b;
    border-radius: 3px;
    color: #1c1e20;
    font-size: 10px;
    font-weight: 600;
    line-height: 14px;
`;

const LevelMeter = styled.svg`
    display: block;
    align-self: center;
    margin: 11px 0;
    font-size: 13px;
    font-weight: 700;
`;

const Stats = styled.dl`
    display: grid;
    grid-template: 18px 18px / 1fr 1fr;
    grid-auto-flow: column;
    height: 50px;
    margin: 0 0 7px;
    padding: 8px 2px 0;
    background: #111213;
    border: 1px solid #54575a;
    border-radius: 4px;
    font-size: 11px;
    font-weight: 600;
    text-align: center;

    dd {
        margin: 0;
    }
`;

const marks = [[0, 14], [5, 74], [10, 135], [15, 195], [20, 256], [25, 306], [30, 351], [35, 391], [40, 424], [50, 473], [60, 492]];
const minor = [0, 1, 2, 3].flatMap(k => [1, 2, 3, 4].map(i => marks[k][1] + i * 12)).concat(452);

const ControlRoom = () => (
    <Floating>
        <FloatingTitle>Control Room - WasteAway-0...<Close aria-label="Schließen">x</Close></FloatingTitle>
        <FloatingFrame $width={192}>
            <Tabs>
                <Tab>CR</Tab>
                <Tab $active>Meter</Tab>
            </Tabs>
            <Body $corners="8px 0 8px 0">
                <Section>
                    <SectionName><Triangle/><Grow>Master</Grow><CrBadge>CR</CrBadge></SectionName>
                </Section>
                <ScaleLine>Digital Scale<span>-18 dBFS</span></ScaleLine>
                <ScaleButtons>
                    <ScaleButton>AES17</ScaleButton>
                    <ScaleButton aria-label="Zurücksetzen">
                        <Svg width="13" height="8"><path d="M0 0h2v8H0zM7 0v8L2.500 4zM12.500 0v8L8 4z"/></Svg>
                    </ScaleButton>
                </ScaleButtons>
                <LevelMeter width="130" height="521" fill="#b8babc">
                    <rect x="38.500" y="11.500" width="53" height="498" fill="#1a1c1e" stroke="#6d7073"/>
                    <rect x="41" y="14" width="48" height="493" fill="#000"/>
                    {[[46, 103], [65, 114]].map(([x, top]) => (
                        <g key={x}>
                            <rect x={x} y={top} width="18" height={135 - top} fill="#f00"/>
                            <rect x={x} y="135" width="18" height="121" fill="#ff0"/>
                            <rect x={x} y="256" width="18" height="95" fill="#00ee3c"/>
                            <rect x={x} y="351" width="18" height="156" fill="#0030ff"/>
                            <rect x={x} y="45" width="18" height="1" fill="#66686a"/>
                            <rect x={x} y={x === 46 ? 60 : 69} width="18" height="1" fill="#5a7fb8"/>
                            <rect x={x} y={x === 46 ? 259 : 258} width="18" height="1" fill="#0a5a18"/>
                        </g>
                    ))}
                    {marks.map(([db, y]) => (
                        <g key={db}>
                            <rect x="28" y={y} width="8" height="1" fill="#e4e4e4"/>
                            <rect x="94" y={y} width="8" height="1" fill="#e4e4e4"/>
                            <text x={db < 10 ? 21 : 25} y={y + 4} textAnchor="end">{db}</text>
                            <text x={db < 10 ? 108 : 104} y={y + 4}>{db}</text>
                        </g>
                    ))}
                    {minor.map(y => (
                        <g key={y} fill="#e4e4e4">
                            <rect x="32" y={y} width="4" height="1"/>
                            <rect x="94" y={y} width="4" height="1"/>
                        </g>
                    ))}
                </LevelMeter>
                <Stats>
                    <dt>Max. RMS</dt>
                    <dd>-18.6</dd>
                    <dt>Max. Peak</dt>
                    <dd>-2.5</dd>
                </Stats>
            </Body>
            <Tabs $bottom>
                <Tab $active $bottom>Master</Tab>
                <Tab $bottom>Lautheit</Tab>
            </Tabs>
        </FloatingFrame>
    </Floating>
);

/* ---------- page ---------- */

const Main = styled.main`
    display: flex;
    flex: 1;
    min-height: 0;
    gap: 4px;
    padding-left: 1px;
`;

const menus = ["Datei", "Bearbeiten", "Projekt", "Audio", "MIDI", "Notation", "Medien", "Transport", "Studio",
    "Arbeitsbereiche", "Fenster", "VST Cloud", "Hub", "Hilfe"];

const CubaseWindow = () => (
    <App>
        <GlobalStyle/>
        <TitleBar>
            <Logo/>
            <Menu>{menus.map(name => <MenuItem key={name}>{name}</MenuItem>)}</Menu>
            <WindowTitle>Cubase Pro</WindowTitle>
            <Controls/>
        </TitleBar>
        <TitleBar $sub>
            <Logo/>
            <WindowTitle $sub>Cubase Pro-Projekt - WasteAway-020519-1</WindowTitle>
            <Controls/>
        </TitleBar>
        <ProjectToolbar/>
        <InfoLine>Kein Objekt ausgewählt</InfoLine>
        <Main>
            <Inspector/>
            <Project>
                <TrackList>
                    <ListHeader>
                        <HeaderGroup>
                            <Tool aria-label="Spur hinzufügen">+</Tool>
                            <Tool aria-label="Spurmenü"><Svg width="9" height="5" fill="currentColor"><path d="M0 0h9L4.500 5z"/></Svg></Tool>
                        </HeaderGroup>
                        <Count>28 / 28</Count>
                        <HeaderGroup>
                            <Tool aria-label="Sichtbarkeit"><Icon name="list" size={13}/></Tool>
                            <Tool aria-label="Spur suchen"><Icon name="find" size={12}/></Tool>
                        </HeaderGroup>
                    </ListHeader>
                    <Rows>{tracks.map(track => <Track key={track.no} track={track}/>)}</Rows>
                    <ListFooter>
                        <Marks d="M1.500 4h3"/>
                        <Spacer/>
                        <Marks d="M1 2.500h6L4 5.500z"/>
                        <Icon name="gear" size={12}/>
                    </ListFooter>
                </TrackList>
                <TimelineView/>
                <Rail>
                    <RailButton aria-label="Linealmenü"><Marks d="M2 3h4L4 5.500z"/></RailButton>
                    <Marks d="M1 7.500L7 1"/>
                    <ZoomRange $vertical type="range" defaultValue="100" aria-label="Wellenform-Zoom"/>
                    <RailTrack/>
                    <ScrollThumb $vertical/>
                    <Marks d="M1 2.500h6L4 5z"/>
                    <Marks d="M1.500 4h5" height={14}/>
                    <ZoomRange $vertical type="range" defaultValue="10" aria-label="Zoom vertikal"/>
                    <Marks d="M1.500 4h5M4 1.500v5" height={10}/>
                </Rail>
            </Project>
        </Main>
        <ControlRoom/>
    </App>
);

export default CubaseWindow;
